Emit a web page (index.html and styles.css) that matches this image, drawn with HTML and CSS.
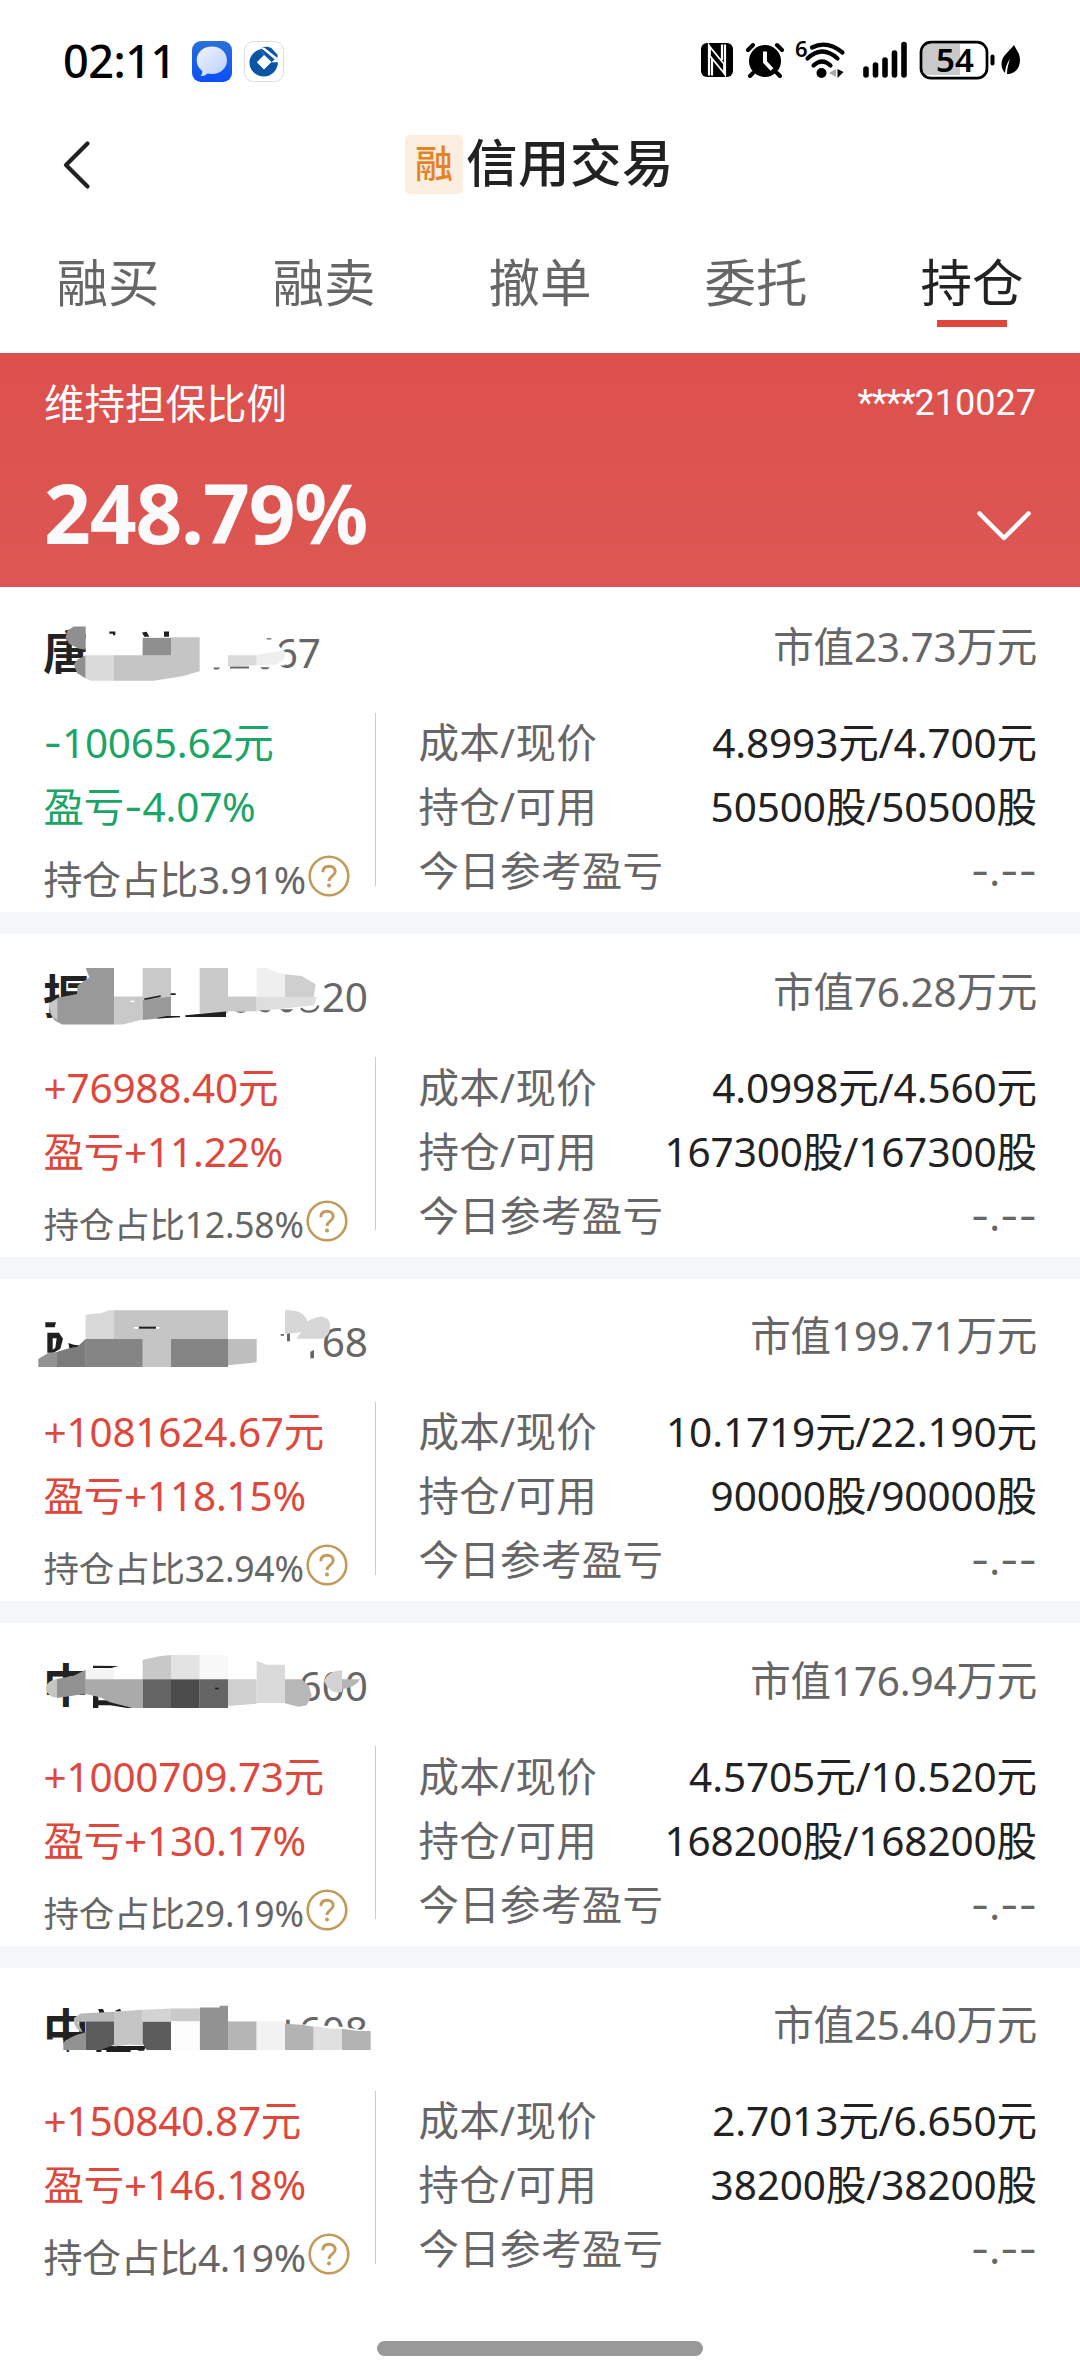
FILE: index.html
```html
<!DOCTYPE html>
<html lang="zh-CN">
<head>
<meta charset="utf-8">
<title>信用交易</title>
<link rel="stylesheet" href="styles.css">
</head>
<body>
<svg width="0" height="0" class="defs">
  <symbol id="help" viewBox="0 0 42 42">
    <circle cx="21" cy="21" r="19.3" fill="none" stroke="#c29a5b" stroke-width="2.6"/>
    <path d="M14.8 17.2c.1-4 2.700-6 6.300-6 3.500 0 6.100 2.100 6.100 5.300 0 4.600-6.200 4.700-6.200 9.500" fill="none" stroke="#c29a5b" stroke-width="2.900"/>
    <circle cx="21" cy="30.400" r="2" fill="#c29a5b"/>
  </symbol>
</svg>

<header class="status">
  <span class="time">02:11</span>
  <svg class="app" viewBox="0 0 40 41">
    <defs>
      <linearGradient id="blue" x2="0" y2="1"><stop offset="0" stop-color="#2a70d8"/><stop offset="1" stop-color="#0a50f8"/></linearGradient>
      <linearGradient id="pale" x2="1" y2="1"><stop offset="0" stop-color="#f0f5ff"/><stop offset="1" stop-color="#b9cffa"/></linearGradient>
    </defs>
    <rect width="40" height="41" rx="9" fill="url(#blue)"/>
    <path d="M20 5.500C11 5.500 4.700 11.500 4.700 19.300c0 4.500 2 8.200 5.500 10.600.2 2-.4 3.700-1.600 5.200 3 0 5.300-1 7-2.600 1.400.3 2.800.5 4.400.5 8.500 0 15-6 15-13.700S28.600 5.500 20 5.500z" fill="url(#pale)"/>
  </svg>
  <svg class="app" viewBox="0 0 40 41">
    <rect x=".5" y=".5" width="39" height="40" rx="9" fill="#fff" stroke="#dcdcdc"/>
    <path d="M15.500 8.500C9.500 10.500 5.500 15.500 5.500 21.500 5.500 29.500 12 35.500 20 35.500c7.500 0 13.500-6 14-14.200h-7l-7 7-7-7 7-7 5 5.200z" fill="#0a56a4"/>
    <path d="M17.500 6.300c3.500-1.100 7-.8 9.800.8l6.200 6.700v3.300L20.500 6.800M15.500 8.500l3-1.200 12.500 11-3.500 2.700-7-7z" fill="#0a56a4"/>
    <path d="M18 7l14 11.500" stroke="#fff" stroke-width="1.300"/>
    <path d="M20 14.300l7 7-7 7-7-7z" fill="#fff"/>
  </svg>
  <svg class="signals" viewBox="0 0 330 50">
    <rect x="1" y="5" width="32" height="34" rx="6"/>
    <path d="M9 37.500V8l15 25M12 37.500V19M25 6.500V36L9.500 9.500M22 6.500V22" fill="none" stroke="#fff" stroke-width="2.200"/>
    <path d="M10 9l14 17v9L10 18z" stroke="#fff" stroke-width="1.800"/>
    <circle cx="65" cy="23" r="16"/>
    <path d="M48 12l5-5M82 12l-5-5M53 35l-3 3M77 35l3 3" stroke="#000" stroke-width="4" stroke-linecap="round"/>
    <path d="M65 13.500V24l7 7.500" fill="none" stroke="#fff" stroke-width="4"/>
    <text x="95" y="19" class="six">6</text>
    <path d="M112 9.500q15-7.500 30.500 5M107.500 20.500q14.500-14 30 0M113.500 27.500q8.500-8 17 0" fill="none" stroke="#000" stroke-width="4.200" stroke-linecap="round"/>
    <circle cx="121.500" cy="35" r="5"/>
    <path d="M136 31v8l-7-4z" fill="#aaa"/><path d="M137.500 31v9l6-6z"/>
    <path d="M166 31v6M175.500 27v10M185 22v15M194.500 15v22M204 6.500v30.500" stroke="#000" stroke-width="5.600" stroke-linecap="round"/>
    <path d="M221 13q0-7 7-7h32v31h-32q-7 0-7-7z" fill="#c9c9c9"/>
    <rect x="221" y="4.200" width="66" height="36" rx="10" fill="none" stroke="#000" stroke-width="2.700"/>
    <text x="236" y="34" class="charge">54</text>
    <path d="M292.500 18.500v7" stroke="#000" stroke-width="4" stroke-linecap="round"/>
    <path d="M314 7c-6 8-12 10-12.500 19 0 4 1.500 7 3.500 9 .5-6 2-10 5-14-1.500 5-3 9-3 15 8 0 13-6 13-14 0-6-3.500-10-6-15z"/>
  </svg>
</header>

<div class="titlebar">
  <svg class="back" viewBox="0 0 28 48"><path d="M24.500 2.500L3 24l21.500 21.500" fill="none" stroke="#222" stroke-width="4.200" stroke-linecap="round" stroke-linejoin="round"/></svg>
  <h1 class="title"><span class="badge">融</span>信用交易</h1>
</div>

<nav class="tabs">
  <a class="tab">融买</a><a class="tab">融卖</a><a class="tab">撤单</a><a class="tab">委托</a><a class="tab active">持仓</a>
</nav>

<section class="ratio">
  <div class="ratio-top"><span>维持担保比例</span><span class="account"><span class="stars">****</span>210027</span></div>
  <div class="ratio-main">
    <strong>248.79%</strong>
    <svg class="chevron" viewBox="0 0 54 30"><path d="M2.500 2.500L27 27 51.500 2.500" fill="none" stroke="#fff" stroke-width="4.500" stroke-linecap="round" stroke-linejoin="round"/></svg>
  </div>
</section>

<main class="list">
  <article class="card">
    <div class="head">
      <div class="stock short"><b>唐</b><span>67</span></div>
      <div class="value">市值23.73万元</div>
      <svg class="mosaic" viewBox="0 -31.500 1200 360">
        <path fill="#1f1f1f" d="M328 93h18v12h-7v-5h-11zM426 96l14-2 8 15h-15zM492 93h15v16h-15z"/>
        <path fill="#fff" d="M257 75h70v30h100v58H262l-5-10z"/>
        <path fill="#8f8f8f" d="M257 78h-36l-20 14-4 18 10 20 28 14 22 4z"/>
        <path fill="#8f8f8f" d="M257 164l-25 14-11 14 10 25 26 17z"/>
        <path fill="#dadada" d="M257 164h85v77h-70l-15-8z"/>
        <path fill="#c5c5c5" d="M342 164h86v-20h85v-34h86v102l-52 15-86 14H342z"/>
        <path fill="#8f8f8f" d="M428 112h85v52h-85z"/>
        <path fill="#fff" d="M684 110h130l40 45v40H684z"/>
        <path fill="#666" d="M640 201h20l-5 6h-12zM690 198h57v6h-57zM780 200h30l-8 6h-14zM800 113h14v4h-14z"/>
        <path fill="#dadada" d="M684 164h86v30l-86 4z"/><path fill="#efefef" d="M770 162l84-12v25l-24 18-60 2z"/>
      </svg>
    </div>
    <div class="body">
      <div class="profit down"><div><i>-</i>10065.62元</div><div>盈亏<i>-</i>4.07%</div><div class="share wide">持仓占比3.91%<svg><use href="#help"/></svg></div></div>
      <dl class="facts"><dt>成本/现价</dt><dd>4.8993元/4.700元</dd><dt>持仓/可用</dt><dd>50500股/50500股</dd><dt>今日参考盈亏</dt><dd class="none"><i>-</i>.<i>--</i></dd></dl>
    </div>
  </article>

  <article class="card">
    <div class="head">
      <div class="stock"><b>振</b><span>20</span></div>
      <div class="value">市值76.28万元</div>
      <svg class="mosaic" viewBox="0 -17.700 1200 360">
        <path fill="#fff" d="M225 165h50v75h-50z"/>
        <path fill="#999" d="M257 84h85v170H187l-23-12-18-29 4-22 20-17 61-12 2-25 35-25z"/>
        <path fill="#c9c9c9" d="M146 190l26-13v64l-16-13zM342 170h86v-86h85v86l-85 15v54l-60 15h-26zM599 84h85v86h86v44h-86v7h-85z"/>
        <path fill="#999" d="M428 180l85-10v62l-85 8z"/>
        <path fill="#efefef" d="M770 84h30l30 14 25 5v68h-85z"/>
        <path fill="#dedede" d="M770 171h180l-8 25-110 12-62 6z"/>
        <path fill="#cfcfcf" d="M855 103l50 5 42 25-6 38h-86z"/>
        <path fill="#1f1f1f" d="M432 176l50-10v5l-48 9zM512 160h15v5h-15zM470 234l30-6h40v4l-66 4zM556 226l74-7 48-4v16H556z"/>
        <path fill="#666" d="M705 215h34q-16 8-34 0zM778 211h34q-16 14-34 0zM840 208h40q-19 20-40 0z"/>
        <path fill="none" stroke="#666" stroke-width="7" d="M903 205q10 12 28 10 20-2 24-18"/>
        <path fill="#fff" d="M391 182h12v5h-12z"/>
      </svg>
    </div>
    <div class="body">
      <div class="profit"><div>+76988.40元</div><div>盈亏+11.22%</div><div class="share">持仓占比12.58%<svg><use href="#help"/></svg></div></div>
      <dl class="facts"><dt>成本/现价</dt><dd>4.0998元/4.560元</dd><dt>持仓/可用</dt><dd>167300股/167300股</dd><dt>今日参考盈亏</dt><dd class="none"><i>-</i>.<i>--</i></dd></dl>
    </div>
  </article>

  <article class="card">
    <div class="head">
      <div class="stock"><b></b><span>68</span></div>
      <div class="value">市值199.71万元</div>
      <svg class="mosaic" viewBox="0 -4 1200 360">
        <path fill="#1f1f1f" d="M136 126h32l-4 15h-28zM142 157h35l12 18-8 30-20 12h-19zM205 188l16 5 23 3-18 14-18-6z"/>
        <path fill="#fff" d="M158 174h12l-4 28-8 6z"/>
        <path fill="#929292" d="M115 260v-24l28-17 30-4 30-10 30-6 24-23v84z"/>
        <path fill="#7b7b7b" d="M171 215l32-10 30-6 24-23v84h-86z"/>
        <path fill="#d8d8d8" d="M257 103l45-4 25-9h15v86h-85z"/>
        <path fill="#c5c5c5" d="M342 90h342v86H513v84h-85v-84h-86z"/>
        <path fill="#858585" d="M257 176h171v84H257zM513 176h171v84H513z"/>
        <path fill="#bebebe" d="M684 176h86v70l-50 5-36 4z"/>
        <path fill="#1f1f1f" d="M416 139h52v6h-52z"/><path fill="#fff" d="M402 140h14v5h-14zM468 140h10v5h-10z"/>
        <path fill="#666" d="M861 156h9v27h-9zM842 161h10v5h-10zM931 214l11-5v25h-11z"/>
        <path fill="#d7d7d7" d="M855 90q55-5 67 33 55-30 68 5 5 34-22 47h-79l14-19-48 5z"/>
      </svg>
    </div>
    <div class="body">
      <div class="profit"><div>+1081624.67元</div><div>盈亏+118.15%</div><div class="share">持仓占比32.94%<svg><use href="#help"/></svg></div></div>
      <dl class="facts"><dt>成本/现价</dt><dd>10.1719元/22.190元</dd><dt>持仓/可用</dt><dd>90000股/90000股</dd><dt>今日参考盈亏</dt><dd class="none"><i>-</i>.<i>--</i></dd></dl>
    </div>
  </article>

  <article class="card">
    <div class="head">
      <div class="stock"><b>中</b><span>600</span></div>
      <div class="value">市值176.94万元</div>
      <svg class="mosaic" viewBox="0 10 1200 360">
        <path fill="#1f1f1f" d="M279 138l76 1-20 6h-56zM279 227h16v15h36l70 23h-20l-50-8h-36v8h-16z"/>
        <path fill="#c5c5c5" d="M171 178v56q-30 0-33-32 5-20 33-24z"/>
        <path fill="#929292" d="M171 178l50-10 36-18v72l-50 8-36 5z"/>
        <path fill="#f5f5f5" d="M257 148h30l55-4v35h-85z"/>
        <path fill="#aaa" d="M257 179h171v86h-30l-68-17-30-15-43-10z"/>
        <path fill="#c8c8c8" d="M428 120l50-10 35-4v73h-85z"/><path fill="#e3e3e3" d="M513 106h86v73h-86z"/><path fill="#f8f8f8" d="M599 106h75l10 10v63h-85z"/>
        <path fill="#656565" d="M428 179h85v86h-85zM599 179h85v86h-85z"/><path fill="#4b4b4b" d="M513 179h86v86h-86z"/>
        <path fill="#cfcfcf" d="M684 179h86v73l-86 7z"/><path fill="#dadada" d="M770 124l30 11h55v115h-85z"/>
        <path fill="#b7b7b7" d="M855 179h50l22 20 8 30-15 28-25 4-40-10z"/>
        <path fill="#d2d2d2" d="M972 184q12-31 54-32v65q-36 8-54-33z"/><path fill="#b5b5b5" d="M1026 179h54q-12 23-54 30z"/>
        <path fill="#1f1f1f" d="M645 204h11v5h-11z"/>
      </svg>
    </div>
    <div class="body">
      <div class="profit"><div>+1000709.73元</div><div>盈亏+130.17%</div><div class="share">持仓占比29.19%<svg><use href="#help"/></svg></div></div>
      <dl class="facts"><dt>成本/现价</dt><dd>4.5705元/10.520元</dd><dt>持仓/可用</dt><dd>168200股/168200股</dd><dt>今日参考盈亏</dt><dd class="none"><i>-</i>.<i>--</i></dd></dl>
    </div>
  </article>

  <article class="card">
    <div class="head">
      <div class="stock"><b>中</b><span>1608</span></div>
      <div class="value">市值25.40万元</div>
      <svg class="mosaic" viewBox="0 23.700 1200 360">
        <path fill="#fff" d="M855 192l30 0 140 8 87 14v70H855zM820 150h38v50h-38zM858 150h30v29h-30zM170 240h30v40h-30zM135 238h55v40h-55z"/>
        <path fill="#1f1f1f" d="M295 147h14l5 12h-16zM345 152l15-6 4 8h-16zM290 258h140v12h-38v6h-73v-6h-15v6h-15zM415 258h24l-7 14h-18z"/>
        <path fill="#c5c5c5" d="M342 155l86-6v107l-40-3-46 6z"/>
        <path fill="#b8b8b8" d="M222 184v-10l20-14 100-5v30H232l16 32q-24-10-26-33z"/>
        <path fill="#929292" d="M190 270v-25l35-20 32-8v53zM599 142h60v-5h25v133h-85z"/>
        <path fill="#1f1f1f" d="M190 238l12-18 46-3-25 10-24 12-9 10z"/>
        <path fill="#5c5c5c" d="M257 184h85v70l-40 16h-45zM428 184h85v86h-73l-12-20z"/>
        <path fill="#d4d4d4" d="M428 149l85-4v39h-85z"/><path fill="#cacaca" d="M513 145h86v39h-86z"/><path fill="#fcfcfc" d="M513 184h86v86h-86z"/>
        <path fill="#b5b5b5" d="M684 184h86v86h-86z"/><path fill="#f2f2f2" d="M770 184h85v86h-85z"/>
        <path fill="#b3b3b3" d="M855 191l50 3 36 6v70h-86zM1026 206l50 7h36v57h-86z"/><path fill="#e0e0e0" d="M941 198l50 7 35 1v64h-85z"/>
      </svg>
    </div>
    <div class="body">
      <div class="profit"><div>+150840.87元</div><div>盈亏+146.18%</div><div class="share wide">持仓占比4.19%<svg><use href="#help"/></svg></div></div>
      <dl class="facts"><dt>成本/现价</dt><dd>2.7013元/6.650元</dd><dt>持仓/可用</dt><dd>38200股/38200股</dd><dt>今日参考盈亏</dt><dd class="none"><i>-</i>.<i>--</i></dd></dl>
    </div>
  </article>
</main>
<div class="home"></div>
</body>
</html>
```
FILE: styles.css
```css
* { box-sizing: border-box; margin: 0; padding: 0; }
body {
  width: 1080px;
  height: 2373px;
  overflow: hidden;
  display: flex;
  flex-direction: column;
  background: #fff;
  color: #222;
  font-family: "Noto Sans", "Noto Sans CJK SC", sans-serif;
  font-size: 40.5px;
}
svg { display: block; flex: none; overflow: visible; }
i { font-style: normal; font-family: Inter, sans-serif; }
.defs { position: absolute; }

.status { height: 122px; display: flex; align-items: center; padding: 0 45px 0 63px; }
.time { width: 129px; font-size: 45px; font-weight: 500; line-height: 60px; letter-spacing: -.5px; color: #000; white-space: nowrap; }
.app { width: 40px; height: 41px; margin-right: 11.500px; }
.signals { width: 330px; height: 50px; margin: 4px 5px 0 auto; }
.six { font: 600 22px "Noto Sans", sans-serif; }
.charge { font: 600 33px "Noto Sans", sans-serif; }

.titlebar { height: 86px; display: flex; align-items: center; padding-left: 63px; }
.back { width: 28px; height: 48px; }
.title { flex: 1; display: flex; align-items: center; margin-top: -6px; padding-left: 314px; font-size: 51.500px; font-weight: 500; letter-spacing: .5px; line-height: 60px; }
.badge { width: 58px; height: 59px; margin: 5px 3px 0 0; border-radius: 5px; background: #fcede1; color: #e38324; font-size: 38px; letter-spacing: 0; line-height: 55px; text-align: center; }

.tabs { height: 144.500px; display: grid; grid-template-columns: repeat(5, 1fr); }
.tab { display: flex; flex-direction: column; align-items: center; padding-top: 44px; font-size: 51.500px; line-height: 60px; color: #666; }
.active { color: #222; }
.active::after { content: ""; width: 70px; height: 6.500px; margin-top: 8px; background: #e0463c; }

.ratio { height: 234.500px; padding: 21px 44px 0 44px; background: linear-gradient(#dd504d, #dc5753); color: #fff; }
.ratio-top { display: flex; justify-content: space-between; line-height: 60px; }
.account { font-family: Roboto, sans-serif; font-size: 36px; line-height: 58px; }
.stars { letter-spacing: -1.200px; }
.ratio-main { display: flex; justify-content: space-between; align-items: center; height: 100px; margin-top: 28px; padding-right: 5px; }
.ratio-main strong { font-size: 82px; line-height: 98px; letter-spacing: -1.200px; color: #fafafa; }
.chevron { width: 54px; height: 30px; margin-top: 28px; }

.list { padding-top: 2.500px; display: flex; flex-direction: column; background: #fff; }
.card { height: 344.600px; border-bottom: 22.500px solid #f5f6f8; }
.card:last-child { border-bottom-color: #fff; }
.head { position: relative; height: 120.500px; display: flex; justify-content: space-between; padding: 0 43px 0 43px; }
.stock { width: 325px; height: 60px; margin-top: 33px; display: flex; justify-content: space-between; line-height: 60px; }
.short { width: 278px; }
.stock b { font-size: 46px; font-weight: 600; line-height: 57px; }
.stock span { color: #666; }
.value { margin-top: 27.500px; line-height: 60px; letter-spacing: -.2px; color: #666; }
.mosaic { position: absolute; left: 0; top: 0; width: 400px; height: 120px; }
.body { display: flex; height: 192px; padding-right: 43px; }
.profit { width: 376px; height: 173px; margin-top: 2.500px; padding-left: 43.500px; border-right: 1.500px solid #ccc; color: #de473c; white-space: nowrap; letter-spacing: -.2px; }
.profit > div { height: 64px; line-height: 64px; margin-top: -1.500px; margin-bottom: 1.500px; }
.down { color: #1ba566; }
.profit .share { display: flex; align-items: center; gap: 2px; margin-top: 8px; color: #666; font-size: 35.500px; }
.profit .wide { font-size: 39px; letter-spacing: -.4px; }
.share svg { width: 42px; height: 42px; margin-top: -6px; }
.facts { flex: 1; padding: 1px 0 0 42.500px; display: grid; grid-template-columns: auto 1fr; grid-auto-rows: 64px; line-height: 64px; }
.facts dt { color: #666; letter-spacing: .3px; }
.facts dd { text-align: right; letter-spacing: -.1px; }
.facts .none { color: #666; }

.home { width: 326px; height: 15px; margin: 29px auto 0; border-radius: 8px; background: #999; }
```
